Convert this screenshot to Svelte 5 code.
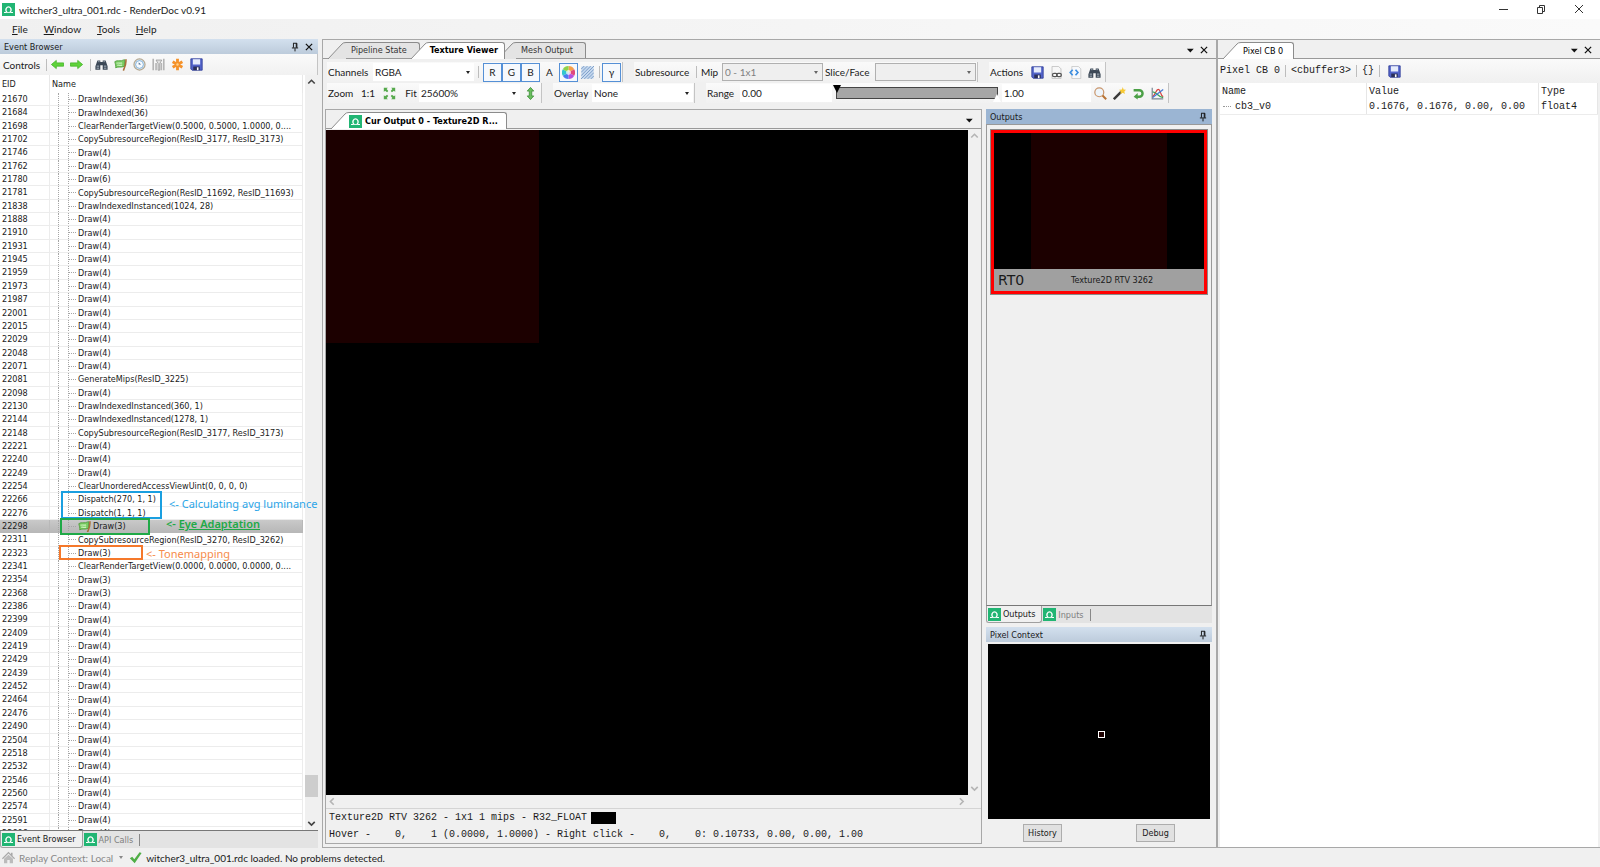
<script lang="ts">
  interface DrawEvent {
    eid: number
    name: string
    current?: boolean
  }

  function draws(count: number, ...eids: number[]): DrawEvent[] {
    return eids.map((eid) => ({ eid, name: `Draw(${count})` }))
  }

  const events: DrawEvent[] = [
    { eid: 21670, name: 'DrawIndexed(36)' },
    { eid: 21684, name: 'DrawIndexed(36)' },
    { eid: 21698, name: 'ClearRenderTargetView(0.5000, 0.5000, 1.0000, 0....' },
    { eid: 21702, name: 'CopySubresourceRegion(ResID_3177, ResID_3173)' },
    ...draws(4, 21746, 21762),
    ...draws(6, 21780),
    { eid: 21781, name: 'CopySubresourceRegion(ResID_11692, ResID_11693)' },
    { eid: 21838, name: 'DrawIndexedInstanced(1024, 28)' },
    ...draws(4, 21888, 21910, 21931, 21945, 21959, 21973, 21987, 22001, 22015, 22029, 22048, 22071),
    { eid: 22081, name: 'GenerateMips(ResID_3225)' },
    ...draws(4, 22098),
    { eid: 22130, name: 'DrawIndexedInstanced(360, 1)' },
    { eid: 22144, name: 'DrawIndexedInstanced(1278, 1)' },
    { eid: 22148, name: 'CopySubresourceRegion(ResID_3177, ResID_3173)' },
    ...draws(4, 22221, 22240, 22249),
    { eid: 22254, name: 'ClearUnorderedAccessViewUint(0, 0, 0, 0)' },
    { eid: 22266, name: 'Dispatch(270, 1, 1)' },
    { eid: 22276, name: 'Dispatch(1, 1, 1)' },
    { eid: 22298, name: 'Draw(3)', current: true },
    { eid: 22311, name: 'CopySubresourceRegion(ResID_3270, ResID_3262)' },
    ...draws(3, 22323),
    { eid: 22341, name: 'ClearRenderTargetView(0.0000, 0.0000, 0.0000, 0....' },
    ...draws(3, 22354, 22368),
    ...draws(4, 22386, 22399, 22409, 22419, 22429, 22439, 22452, 22464, 22476, 22490),
    ...draws(4, 22504, 22518, 22532, 22546, 22560, 22574, 22591, 22606),
  ]

  let selected = $state(22298)
  let rangeMin = $state(0)
  let rangeMax = $state(100)
  let channels = $state({ R: true, G: true, B: true, A: false })
</script>

{#snippet icon(name: string)}
  <svg class="icon" viewBox="0 0 16 16" aria-hidden="true">
    {#if name === 'logo'}
      <rect width="16" height="16" fill="#21b573" />
      <path
        d="M2.500 11.700H6.200C4.600 10 4.500 7.800 5.400 6.300c1.100-2 4.100-2 5.200 0 .9 1.500.8 3.700-.8 5.400h3.700"
        fill="none"
        stroke="#fff"
        stroke-width="1.500"
      />
      <path d="M5 11.700h6" stroke="#d5f5e6" stroke-width="1.200" />
    {:else if name === 'back' || name === 'forward'}
      <path
        d="M0.500 8L6.500 3v3h9v4h-9v3z"
        fill="#5fd33a"
        stroke="#45b52a"
        transform={name === 'forward' ? 'rotate(180 8 8)' : undefined}
      />
    {:else if name === 'find'}
      <path d="M3 3h3.500v2h3V3H13l2.500 7v4.500H9.500V9h-3v5.500H.5V10z" fill="#3c4856" />
      <path d="M2 10h3M11 10h3M4 4.500h1.500M10.500 4.500H12M2 12.500h3M11 12.500h3" stroke="#c4ced8" />
    {:else if name === 'flag'}
      <path d="M1 4.500c3-2.500 6 .5 12-2.500v8c-5 2.500-7 0-11 2 .5-2-.5-5-1-7.500z" fill="#79cc62" stroke="#4d9b3b" />
      <path d="M3 6.500c2-1 5 .5 7-.5M4 9c2-.5 4 .5 6-.2" stroke="#c9f2ba" fill="none" stroke-width="1.500" />
      <path d="M14.500 1.500c1 5-1 9-3 14" stroke="#a8713a" stroke-width="2" fill="none" />
    {:else if name === 'clock'}
      <circle cx="8" cy="8" r="6.800" fill="#dcecf7" stroke="#b3a68f" stroke-width="1.500" />
      <circle cx="8" cy="8" r="4.800" fill="#f5faff" stroke="#6fa3cf" />
      <path d="M7 5.500L10 8H7z" fill="#4a6b8a" />
    {:else if name === 'counters'}
      <path d="M1.500 1v14M5 6v9M11.500 6v9M14.500 1v14" stroke="#b4b4b4" stroke-width="2" />
      <path d="M5 2.500h7L9.500 7v8h-2V7z" fill="#e0e0e0" stroke="#999" />
    {:else if name === 'star'}
      <path d="M8 1v14M2 4.500l12 7M2 11.500l12-7" stroke="#f5922a" stroke-width="3.500" />
      <circle cx="8" cy="8" r="1.500" fill="#ffd28a" />
    {:else if name === 'save'}
      <path d="M1 1h14v14H2.500L1 13.500z" fill="#5263c9" stroke="#2e3b98" />
      <path d="M3.500 1.500h9V8h-9z" fill="#e6ecfb" />
      <path d="M4 10.500h8V15H4z" fill="#2a2f59" />
      <path d="M8.500 11.500h2V15h-2z" fill="#fff" />
    {:else if name === 'wheel'}
      <path d="M8 8V0a8 8 0 0 1 7 4z" fill="#f5a04a" />
      <path d="M8 8l7-4a8 8 0 0 1 0 8z" fill="#e1497c" />
      <path d="M8 8l7 4a8 8 0 0 1-7 4z" fill="#b850dd" />
      <path d="M8 8v8a8 8 0 0 1-7-4z" fill="#4c7cf0" />
      <path d="M8 8l-7 4a8 8 0 0 1 0-8z" fill="#33c6cf" />
      <path d="M8 8L1 4a8 8 0 0 1 7-4z" fill="#8ed24a" />
      <circle cx="8" cy="8" r="3" fill="#fff" opacity="0.700" />
    {:else if name === 'checker'}
      <rect x="0.500" y="0.500" width="15" height="15" fill="#c5d8ee" />
      <path d="M0 4l4-4M0 8l8-8M0 12L12 0M0 16L16 0M4 16L16 4M8 16l8-8M12 16l4-4" stroke="#7c9dc8" stroke-width="1.200" />
    {:else if name === 'fit'}
      <path
        d="M1 1h5L4.500 2.500 6.500 5 5 6.500 2.500 4.500 1 6zM15 1v5l-1.500-1.500L11 6.500 9.500 5l2-2.500L10 1zM1 15v-5l1.500 1.500L5 9.500 6.500 11l-2 2.500L6 15zM15 15h-5l1.500-1.500-2-2.500L11 9.500l2.500 2L15 10z"
        fill="#56a94c"
      />
    {:else if name === 'updown'}
      <path d="M8 0.500L12 5H9.500v6H12L8 15.500 4 11h2.500V5H4z" fill="#6abf5e" stroke="#3c8f37" />
    {:else if name === 'link'}
      <path d="M2.500.5h8l3 3v12h-11z" fill="#f7f7f7" stroke="#bbb" />
      <rect x="3" y="9" width="6" height="4" rx="2" fill="none" stroke="#555" stroke-width="1.500" />
      <rect x="8" y="9" width="6" height="4" rx="2" fill="none" stroke="#555" stroke-width="1.500" />
    {:else if name === 'code'}
      <path d="M3.500.5h8l3 3v12h-11z" fill="#f7f9fc" stroke="#c4c4c4" />
      <path d="M4.500 4.500L1.500 8l3 3.500M8 4.500L11 8l-3 3.500" fill="none" stroke="#3b8de0" stroke-width="2" />
    {:else if name === 'lens'}
      <circle cx="6.500" cy="6.500" r="5.500" fill="#eef5fb" stroke="#c9956b" stroke-width="1.500" />
      <path d="M10.500 10.500L15 15" stroke="#b87436" stroke-width="2.500" />
    {:else if name === 'wand'}
      <path d="M1 15L10 6" stroke="#3a3a3a" stroke-width="3" />
      <path d="M12 0l1 3 3 .5-2 2 .5 3L12 7 9 8.500l.5-3-2-2L11 3z" fill="#f7c934" />
    {:else if name === 'reset'}
      <path d="M2 4h7a4 4 0 0 1 0 8H6" fill="none" stroke="#4ba046" stroke-width="3" />
      <path d="M7 7.500v8L2 12z" fill="#4ba046" />
    {:else if name === 'histogram'}
      <path d="M1.500 1v13.500H15" fill="none" stroke="#7b8794" stroke-width="1.500" />
      <path d="M2 12C6 9 6 3 9 3s2 7 6 9" fill="none" stroke="#d8403c" stroke-width="1.500" />
      <path d="M2 6c5 0 7 7 13 7" fill="none" stroke="#3aa457" stroke-width="1.500" />
      <path d="M2 13L15 3" stroke="#4279d6" stroke-width="1.500" />
    {:else if name === 'pin'}
      <path d="M5 2h6M5.500 2v7M10 2v7M11 2v7M3 9.500h10M8 10v5" fill="none" stroke="#111" stroke-width="1.500" />
    {:else if name === 'close'}
      <path d="M3 3l10 10M13 3L3 13" stroke="#111" stroke-width="2" />
    {:else if name === 'menu'}
      <path d="M3 6h11L8.500 12z" fill="#111" />
    {:else if name === 'home'}
      <path d="M0 9L8 1l3 3V2h2v4l3 3-1 1-7-7-7 7z" fill="#a8a8a8" />
      <path d="M2.500 9.500L8 4.500l5.500 5V15h-4v-4h-3v4h-4z" fill="#bbb" />
    {:else if name === 'tick'}
      <path d="M1 9l3-2 2.500 3L13 1.500l2.500 1L7 15z" fill="#4fae46" />
    {:else if name === 'up'}
      <path d="M4 10.500l4-4 4 4" fill="none" stroke="currentColor" stroke-width="2" />
    {:else if name === 'down'}
      <path d="M4 6l4 4 4-4" fill="none" stroke="currentColor" stroke-width="2" />
    {:else if name === 'left'}
      <path d="M9.500 4l-4 4 4 4" fill="none" stroke="currentColor" stroke-width="2" />
    {:else if name === 'right'}
      <path d="M6 4l4 4-4 4" fill="none" stroke="currentColor" stroke-width="2" />
    {/if}
  </svg>
{/snippet}

{#snippet tool(name: string, label: string)}
  <button class="tool" title={label} aria-label={label}>{@render icon(name)}</button>
{/snippet}

{#snippet slant()}
  <svg class="slant" viewBox="0 0 18 17" aria-hidden="true">
    <path class="fill" d="M0 17L14 2Q15 0 18 0V17z" />
    <path d="M0 17L14 2Q15 .5 18 .5" fill="none" stroke="#8c8c8c" />
  </svg>
{/snippet}

<div class="app">
  <header class="titlebar">
    {@render icon('logo')}
    <span class="title">witcher3_ultra_001.rdc - RenderDoc v0.91</span>
    <div class="window-buttons">
      <button aria-label="Minimize"><svg viewBox="0 0 10 10"><path d="M1 5.500h9" /></svg></button>
      <button aria-label="Restore"><svg viewBox="0 0 10 10"><path d="M1.500 3.500h5v6h-5zM3.500 3V1.500h5v6H7" /></svg></button>
      <button aria-label="Close"><svg viewBox="0 0 10 10"><path d="M1 1l8 8M9 1L1 9" /></svg></button>
    </div>
  </header>

  <nav class="menubar">
    <button><u>F</u>ile</button>
    <button><u>W</u>indow</button>
    <button><u>T</u>ools</button>
    <button><u>H</u>elp</button>
  </nav>

  <div class="workspace">
    <aside class="browser">
      <div class="caption">
        <span>Event Browser</span>
        {@render tool('pin', 'Pin')}
        {@render tool('close', 'Close')}
      </div>
      <div class="strip controls">
        <span class="controls-label">Controls</span>
        <i class="sep"></i>
        {@render tool('back', 'Previous drawcall')}
        {@render tool('forward', 'Next drawcall')}
        <i class="sep"></i>
        {@render tool('find', 'Find')}
        {@render tool('flag', 'Go to EID')}
        {@render tool('clock', 'Time drawcalls')}
        {@render tool('counters', 'Select columns')}
        {@render tool('star', 'Bookmark')}
        {@render tool('save', 'Export')}
      </div>
      <div class="event-area">
        <table class="events">
          <thead>
            <tr><th class="eid">EID</th><th>Name</th></tr>
          </thead>
          <tbody>
            {#each events as event (event.eid)}
              <tr class:selected={event.eid === selected} onclick={() => (selected = event.eid)}>
                <td class="eid">{event.eid}</td>
                <td class="name">
                  <i class="branch"></i>
                  {#if event.current}{@render icon('flag')}{/if}
                  <span>{event.name}</span>
                </td>
              </tr>
            {/each}
          </tbody>
        </table>
        <div class="scroll">
          {@render icon('up')}
          <i class="thumb"></i>
          {@render icon('down')}
        </div>

        <div class="mark blue-box"></div>
        <div class="mark green-box"></div>
        <div class="mark orange-box"></div>
        <span class="note blue-note">&lt;- Calculating avg luminance</span>
        <span class="note green-note">&lt;- <u>Eye Adaptation</u></span>
        <span class="note orange-note">&lt;- Tonemapping</span>
      </div>
      <div class="bottom-tabs">
        <button class="on">{@render icon('logo')}Event Browser</button>
        <button>{@render icon('logo')}API Calls</button>
      </div>
    </aside>

    <main class="viewer">
      <div class="tabs">
        <button class="tab">{@render slant()}<span>Pipeline State</span></button>
        <button class="tab on">{@render slant()}<span>Texture Viewer</span></button>
        <button class="tab">{@render slant()}<span>Mesh Output</span></button>
        <div class="tab-tools">{@render tool('menu', 'Window list')}{@render tool('close', 'Close')}</div>
      </div>

      <div class="toolbar">
        <div class="strip">
          <label class="lbl" for="channels">Channels</label>
          <div class="combo"><select id="channels"><option>RGBA</option></select></div>
          <i class="sep"></i>
          {#each ['R', 'G', 'B', 'A'] as const as ch}
            <button class="toggle" class:on={channels[ch]} onclick={() => (channels[ch] = !channels[ch])}>{ch}</button>
          {/each}
          <button class="toggle on" aria-label="Custom background">{@render icon('wheel')}</button>
          <button class="toggle" aria-label="Checkerboard">{@render icon('checker')}</button>
          <i class="sep"></i>
          <button class="toggle on">γ</button>
        </div>
        <div class="strip">
          <span class="lbl subresource">Subresource</span>
          <i class="sep"></i>
          <label class="lbl short" for="mip">Mip</label>
          <div class="combo disabled"><select id="mip" disabled><option>0 - 1x1</option></select></div>
          <label class="lbl slice" for="slice">Slice/Face</label>
          <div class="combo disabled"><select id="slice" disabled><option></option></select></div>
        </div>
        <div class="strip">
          <span class="lbl actions">Actions</span>
          {@render tool('save', 'Save texture')}
          {@render tool('link', 'Open in new tab')}
          {@render tool('code', 'View raw contents')}
          {@render tool('find', 'Find usage')}
        </div>
      </div>

      <div class="toolbar">
        <div class="strip">
          <label class="lbl zoom" for="zoom">Zoom</label>
          <button class="text-tool">1:1</button>
          {@render tool('fit', 'Fit window')}
          <button class="text-tool">Fit</button>
          <div class="combo"><select id="zoom"><option>25600%</option></select></div>
          {@render tool('updown', 'Flip Y')}
        </div>
        <div class="strip">
          <label class="lbl overlay" for="overlay">Overlay</label>
          <div class="combo"><select id="overlay"><option>None</option></select></div>
        </div>
        <div class="strip">
          <label class="lbl range-label" for="range-low">Range</label>
          <input class="number" id="range-low" value="0.00" />
          <div class="range">
            <input type="range" class="low" aria-label="Range minimum" bind:value={rangeMin} />
            <input type="range" class="high" aria-label="Range maximum" bind:value={rangeMax} />
          </div>
          <input class="number" aria-label="Range high" value="1.00" />
          {@render tool('lens', 'Zoom to range')}
          {@render tool('wand', 'Auto-fit range')}
          {@render tool('reset', 'Reset range')}
          {@render tool('histogram', 'Histogram')}
        </div>
      </div>

      <div class="docks">
        <section class="texture">
          <div class="tabs">
            <button class="tab on">{@render slant()}<span>{@render icon('logo')}Cur Output 0 - Texture2D R...</span></button>
            <div class="tab-tools">{@render tool('menu', 'Window list')}</div>
          </div>
          <div class="view">
            <div class="canvas"><div class="texel"></div></div>
            <div class="scroll pale">{@render icon('up')}{@render icon('down')}</div>
          </div>
          <div class="hscroll">{@render icon('left')}{@render icon('right')}</div>
          <div class="readout">
            <p>Texture2D RTV 3262 - 1x1 1 mips - R32_FLOAT<i class="swatch"></i></p>
            <p>Hover -    0,    1 (0.0000, 1.0000) - Right click -    0,    0: 0.10733, 0.00, 0.00, 1.00</p>
          </div>
        </section>

        <div class="side">
          <section class="outputs">
            <div class="caption active"><span>Outputs</span>{@render tool('pin', 'Pin')}</div>
            <div class="thumbs">
              <button class="thumbnail">
                <span class="preview"><i></i></span>
                <span class="thumb-label"><b>RT0</b><span>Texture2D RTV 3262</span></span>
              </button>
            </div>
            <div class="bottom-tabs">
              <button class="on">{@render icon('logo')}Outputs</button>
              <button>{@render icon('logo')}Inputs</button>
            </div>
          </section>
          <section class="context">
            <div class="caption"><span>Pixel Context</span>{@render tool('pin', 'Pin')}</div>
            <div class="pixels"><i></i></div>
            <div class="context-buttons">
              <button>History</button>
              <button>Debug</button>
            </div>
          </section>
        </div>
      </div>
    </main>

    <aside class="buffer">
      <div class="tabs">
        <button class="tab on plain">{@render slant()}<span>Pixel CB 0</span></button>
        <div class="tab-tools">{@render tool('menu', 'Window list')}{@render tool('close', 'Close')}</div>
      </div>
      <div class="buffer-bar">
        <span>Pixel CB 0</span>
        <i class="sep"></i>
        <span>&lt;cbuffer3&gt;</span>
        <i class="sep"></i>
        <button class="braces">{'{}'}</button>
        <i class="sep"></i>
        {@render tool('save', 'Save')}
      </div>
      <div class="buffer-body">
        <table>
          <thead>
            <tr><th>Name</th><th class="value">Value</th><th class="type">Type</th></tr>
          </thead>
          <tbody>
            <tr><td><i class="twig"></i>cb3_v0</td><td>0.1676, 0.1676, 0.00, 0.00</td><td>float4</td></tr>
          </tbody>
        </table>
      </div>
    </aside>
  </div>

  <footer class="status">
    {@render icon('home')}
    <span class="muted">Replay Context: Local</span>
    <i class="drop"></i>
    {@render icon('tick')}
    <span>witcher3_ultra_001.rdc loaded. No problems detected.</span>
  </footer>
</div>

<style>
  :global(body) {
    margin: 0;
  }

  .app {
    display: flex;
    flex-direction: column;
    height: 100vh;
    overflow: hidden;
    background: #f0f0f0;
    color: #1a1a1a;
    font: 10px/14px Lato, 'Open Sans', sans-serif;
    white-space: nowrap;
  }

  button,
  select,
  input {
    margin: 0;
    padding: 0;
    border: 0;
    border-radius: 0;
    background: none;
    color: inherit;
    font: inherit;
  }

  .icon {
    display: block;
    flex: none;
    width: 13px;
    height: 13px;
  }

  .titlebar {
    display: flex;
    align-items: center;
    flex: none;
    height: 19px;
    padding-left: 2px;
    gap: 4px;
    background: #fff;
  }

  .title {
    flex: 1;
  }

  .window-buttons {
    display: flex;
    padding-right: 2px;
  }

  .window-buttons button {
    width: 38px;
    height: 17px;
  }

  .window-buttons svg {
    width: 10px;
    height: 10px;
    fill: none;
    stroke: #333;
  }

  .menubar {
    display: flex;
    align-items: center;
    flex: none;
    height: 20px;
    padding-left: 12px;
    gap: 16px;
    background: linear-gradient(90deg, #f0f0f0, #fafafa);
  }

  .workspace {
    display: flex;
    flex: 1;
    min-height: 0;
  }

  /* captions and tool strips */
  .caption {
    display: flex;
    align-items: center;
    flex: none;
    height: 15px;
    padding: 0 2px 0 4px;
    background: linear-gradient(#d3e0ee, #bccbdb);
    font: 9px/14px 'DejaVu Sans Condensed', 'DejaVu Sans', sans-serif;
  }

  .caption span {
    flex: 1;
  }

  .caption .tool {
    width: 14px;
  }

  .caption .icon,
  .tab-tools .icon {
    width: 10px;
    height: 10px;
  }

  .caption.active {
    background: #9bb5d3;
  }

  .tool {
    display: flex;
    align-items: center;
    justify-content: center;
    flex: none;
    width: 19px;
    height: 17px;
  }

  .sep {
    flex: none;
    width: 1px;
    height: 12px;
    background: #bdbdbd;
  }

  .strip {
    display: flex;
    align-items: center;
    flex: none;
    height: 20px;
    padding-right: 1px;
    border-right: 1px solid #c4c4c4;
    background: linear-gradient(#fafafa, #f1f1f1);
  }

  /* event browser */
  .browser {
    display: flex;
    flex-direction: column;
    flex: none;
    width: 318px;
  }

  .controls {
    height: 21px;
    padding-left: 3px;
  }

  .controls-label {
    width: 43px;
  }

  .controls .sep {
    margin-right: 1px;
  }

  .controls .sep:not(:nth-child(2)) {
    margin-left: 4px;
  }

  .event-area {
    position: relative;
    display: flex;
    flex: 1;
    min-height: 0;
    overflow: hidden;
    background: #fff;
    border-bottom: 1px solid #777;
  }

  .events,
  .events tbody {
    display: flex;
    flex-direction: column;
    flex: 1;
    min-width: 0;
    min-height: 0;
  }

  .events {
    /* the last row runs under the bottom edge */
    margin: 0 2px -10px 0;
    font: 9px/12px 'DejaVu Sans Condensed', 'DejaVu Sans', sans-serif;
  }

  .events thead tr {
    display: flex;
    height: 18px;
    line-height: 19px;
  }

  .events th {
    padding: 0 0 0 2px;
    border-right: 1px solid #e8e8e8;
    font-weight: normal;
    text-align: left;
  }

  .events th:last-child {
    flex: 1;
  }

  .events tbody tr {
    display: flex;
    flex: 1;
    min-height: 0;
  }

  .events td {
    padding: 0 0 0 2px;
    border-right: 1px solid #ececec;
    border-bottom: 1px solid #ececec;
    overflow: hidden;
  }

  .events .eid {
    box-sizing: border-box;
    width: 50px;
  }

  .events .name {
    display: flex;
    align-items: center;
    flex: 1;
    min-width: 0;
    padding-left: 8px;
    gap: 2px;
  }

  .branch {
    align-self: stretch;
    box-sizing: border-box;
    width: 18px;
    border-left: 1px dotted #a5a5a5;
    background:
      repeating-linear-gradient(#a5a5a5 0 1px, transparent 1px 2px) 9px 0 / 1px 100% no-repeat,
      repeating-linear-gradient(90deg, #a5a5a5 0 1px, transparent 1px 2px) 10px 6px / 7px 1px no-repeat;
  }

  .events .selected td {
    background: linear-gradient(#c9c9c9, #b8b8b8);
    border-color: #b8b8b8;
  }

  .scroll {
    display: flex;
    flex-direction: column;
    flex: none;
    width: 13px;
    background: #f0f0f0;
    color: #444;
  }

  .thumb {
    height: 22px;
    margin-top: auto;
    margin-bottom: 20px;
    background: #cdcdcd;
  }

  .pale {
    justify-content: space-between;
    color: #b5b5b5;
  }

  /* hand-drawn remarks over the event list */
  .mark,
  .note {
    position: absolute;
    box-sizing: border-box;
    pointer-events: none;
  }

  .mark {
    border: 2px solid;
  }

  .blue-box {
    left: 61px;
    top: 416px;
    width: 101px;
    height: 28px;
    color: #1a9fe0;
  }

  .green-box {
    left: 60px;
    top: 443px;
    width: 90px;
    height: 17px;
    color: #1fa947;
  }

  .orange-box {
    left: 59px;
    top: 470px;
    width: 84px;
    height: 15px;
    color: #f5782a;
  }

  .note {
    font: 11px/14px 'Noto Sans', sans-serif;
  }

  .blue-note {
    left: 169px;
    top: 422px;
    color: #2ba5e8;
  }

  .green-note {
    left: 166px;
    top: 442px;
    color: #1fa947;
    font-weight: 600;
  }

  .orange-note {
    left: 146px;
    top: 472px;
    color: #f68b4a;
  }

  .bottom-tabs {
    display: flex;
    flex: none;
    height: 17px;
    background: #e3e3e3;
    color: #808080;
    font: 9px/14px 'DejaVu Sans Condensed', 'DejaVu Sans', sans-serif;
  }

  .bottom-tabs button {
    display: flex;
    align-items: center;
    padding: 0 6px 0 1px;
    gap: 2px;
  }

  .bottom-tabs button:last-child::after {
    content: '';
    width: 1px;
    height: 12px;
    margin-left: 4px;
    background: #888;
  }

  .bottom-tabs .on {
    border: solid #a0a0a0;
    border-width: 0 1px 1px;
    border-radius: 0 0 3px 3px;
    background: #f0f0f0;
    color: #1a1a1a;
  }

  /* document tabs */
  .viewer {
    display: flex;
    flex-direction: column;
    flex: 1;
    min-width: 0;
    box-sizing: border-box;
    margin-left: 4px;
    border: solid #a8a8a8;
    border-width: 1px 2px 1px 1px;
  }

  .tabs {
    display: flex;
    align-items: flex-end;
    flex: none;
    height: 19px;
    padding-left: 5px;
    box-sizing: border-box;
    border-bottom: 1px solid #999;
    font: 9px/14px 'DejaVu Sans Condensed', 'DejaVu Sans', sans-serif;
  }

  .tab {
    position: relative;
    display: flex;
    height: 16px;
    color: #333;
  }

  .tab + .tab {
    margin-left: -9px;
  }

  .tab.on + .tab {
    margin-left: -7px;
  }

  .slant {
    width: 18px;
    height: 17px;
  }

  .slant .fill {
    fill: #e4e4e4;
  }

  .tab span {
    display: flex;
    align-items: center;
    height: 16px;
    box-sizing: border-box;
    padding: 0 12px 2px 5px;
    gap: 3px;
    border: solid #8c8c8c;
    border-width: 1px 1px 0 0;
    border-radius: 0 3px 0 0;
    background: #e4e4e4;
  }

  .tab.on {
    z-index: 1;
    height: 17px;
    margin-bottom: -1px;
    color: #000;
    font-weight: bold;
  }

  .tab.on span {
    height: 17px;
    padding: 0 6px 2px 1px;
    background: #fff;
  }

  .tab.on .fill {
    fill: #fff;
  }

  .texture .tab span {
    padding: 0 8px 0 0;
  }

  .tab.plain {
    font-weight: normal;
  }

  .tab.plain span {
    padding: 0 10px 0 2px;
  }

  .tab-tools {
    display: flex;
    margin-left: auto;
    padding-right: 5px;
  }

  .tab-tools .tool {
    width: 14px;
  }

  /* texture toolbars */
  .toolbar {
    display: flex;
    flex: none;
    height: 20px;
    margin-top: 1px;
    padding-left: 4px;
    gap: 11px;
  }

  .tabs + .toolbar {
    margin-top: 3px;
  }

  .lbl {
    flex: none;
    width: 46px;
    padding-left: 1px;
    box-sizing: border-box;
  }

  .lbl.subresource {
    width: 62px;
  }

  .lbl.short {
    width: 25px;
    padding-left: 4px;
  }

  .lbl.slice {
    width: 52px;
    padding-left: 2px;
  }

  .lbl.actions {
    width: 39px;
  }

  .lbl.zoom,
  .lbl.range-label {
    width: 34px;
  }

  .lbl.overlay {
    width: 39px;
  }

  .combo {
    position: relative;
    width: 101px;
    height: 18px;
    box-sizing: border-box;
    background: #fff;
  }

  .combo::after {
    content: '';
    position: absolute;
    right: 4px;
    top: 8px;
    border: solid transparent;
    border-width: 3px 2px 0;
    border-top-color: #222;
    pointer-events: none;
  }

  .combo select {
    width: 100%;
    height: 100%;
    padding-left: 2px;
    appearance: none;
    opacity: 1;
  }

  .combo.disabled {
    border: 1px solid #b0b0b0;
    background: #efefef;
    color: #808080;
  }

  .combo.disabled::after {
    top: 7px;
    border-top-color: #666;
  }

  .strip > .combo + .sep {
    margin: 0 4px;
  }

  .toggle {
    display: flex;
    align-items: center;
    justify-content: center;
    width: 19px;
    height: 19px;
    box-sizing: border-box;
  }

  .toggle.on {
    border: 1px solid #5590d6;
    background: #f6f9fd;
  }

  .toggle + .sep {
    margin: 0 2px;
  }

  .text-tool {
    width: 14px;
  }

  .text-tool + .tool {
    margin: 0 5px;
  }

  .text-tool + .combo {
    margin: 0 1px;
  }

  .number {
    width: 92px;
    height: 18px;
    padding-left: 2px;
    box-sizing: border-box;
    background: #fff;
  }

  .range + .number {
    width: 89px;
  }

  .range {
    position: relative;
    width: 162px;
    height: 12px;
    margin: 0 4px;
    box-sizing: border-box;
    border: 1px solid #444;
    background: #a6a6a6;
  }

  .range input {
    position: absolute;
    left: -4px;
    width: calc(100% + 8px);
    height: 8px;
    appearance: none;
    pointer-events: none;
  }

  .range .low {
    top: -3px;
  }

  .range .high {
    top: 6px;
  }

  .range input::-webkit-slider-thumb {
    appearance: none;
    width: 8px;
    height: 8px;
    background: #000;
    clip-path: polygon(0 0, 100% 0, 50% 100%);
    pointer-events: auto;
  }

  .range .high::-webkit-slider-thumb {
    background: #fff;
    clip-path: polygon(50% 0, 100% 100%, 0 100%);
  }

  /* texture view */
  .docks {
    display: flex;
    flex: 1;
    min-height: 0;
    margin-top: 6px;
    padding: 0 4px 3px 2px;
    gap: 4px;
  }

  .texture {
    display: flex;
    flex-direction: column;
    flex: 1;
    min-width: 0;
    border: 1px solid #a8a8a8;
  }

  .view {
    display: flex;
    flex: 1;
    min-height: 0;
  }

  .canvas {
    flex: 1;
    margin-top: 1px;
    background: #000;
  }

  .texel {
    width: 213px;
    height: 213px;
    background: #1c0000;
  }

  .hscroll {
    display: flex;
    justify-content: space-between;
    height: 13px;
    padding-right: 13px;
    border-bottom: 1px solid #d4d4d4;
    color: #b5b5b5;
  }

  .readout {
    padding: 0 3px;
    font: 10px/17px 'Liberation Mono', monospace;
  }

  .readout p {
    display: flex;
    align-items: center;
    margin: 0;
    white-space: pre;
  }

  .swatch {
    width: 25px;
    height: 12px;
    margin-left: 4px;
    background: #000;
  }

  .side {
    display: flex;
    flex-direction: column;
    flex: none;
    width: 226px;
    gap: 4px;
  }

  .outputs {
    display: flex;
    flex-direction: column;
    flex: 1;
    min-height: 0;
  }

  .thumbs {
    flex: 1;
    padding: 5px 4px;
    border: 1px solid #999;
    border-bottom-color: #777;
  }

  .thumbnail {
    display: block;
    width: 100%;
    border: 3px solid #f00;
    outline: 1px solid #8a8a8a;
  }

  .preview {
    display: flex;
    justify-content: center;
    height: 136px;
    background: #000;
  }

  .preview i {
    width: 136px;
    background: #1c0000;
  }

  .thumb-label {
    display: flex;
    align-items: center;
    height: 22px;
    padding-left: 4px;
    background: #a0a0a0;
    font: 9px/14px 'DejaVu Sans Condensed', 'DejaVu Sans', sans-serif;
  }

  .thumb-label b {
    font: 14px/18px 'DejaVu Sans', sans-serif;
  }

  .thumb-label span {
    flex: 1;
    padding-right: 4px;
  }

  .context {
    display: flex;
    flex-direction: column;
    flex: none;
  }

  .pixels {
    display: flex;
    align-items: center;
    justify-content: center;
    box-sizing: border-box;
    height: 175px;
    margin: 2px;
    padding: 6px 0 0 4px;
    background: #000;
  }

  .pixels i {
    width: 5px;
    height: 5px;
    border: 1px solid #fff;
    background: #1c0000;
  }

  .context-buttons {
    display: flex;
    justify-content: space-around;
    padding: 3px 0 2px;
    font: 9px/14px 'DejaVu Sans Condensed', 'DejaVu Sans', sans-serif;
  }

  .context-buttons button {
    width: 39px;
    height: 18px;
    border: 1px solid #adadad;
    background: #e1e1e1;
  }

  /* constant buffer */
  .buffer {
    display: flex;
    flex-direction: column;
    flex: none;
    width: 382px;
    border-top: 1px solid #a8a8a8;
    border-bottom: 1px solid #a8a8a8;
    box-sizing: border-box;
    font: 10px/14px 'Liberation Mono', monospace;
  }

  .buffer-bar {
    display: flex;
    align-items: center;
    height: 24px;
    padding-left: 2px;
    gap: 5px;
    background: linear-gradient(#fafafa, #f0f0f0);
  }

  .braces {
    width: 12px;
  }

  .buffer-body {
    flex: 1;
    margin: 0 2px;
    background: #fff;
  }

  .buffer table {
    width: 100%;
    border-collapse: collapse;
    table-layout: fixed;
  }

  .buffer th,
  .buffer td {
    padding: 0 2px;
    border-right: 1px solid #e6e6e6;
    font-weight: normal;
    text-align: left;
  }

  .buffer td {
    border-bottom: 1px solid #ececec;
  }

  .buffer th {
    height: 17px;
  }

  .buffer .value {
    width: 167px;
  }

  .buffer .type {
    width: 54px;
  }

  .twig {
    display: inline-block;
    width: 8px;
    margin: 0 4px 0 1px;
    border-top: 1px dotted #999;
    vertical-align: middle;
  }

  .status {
    display: flex;
    align-items: center;
    flex: none;
    height: 19px;
    padding-left: 2px;
    gap: 4px;
  }

  .muted {
    color: #888;
  }

  .drop {
    margin: 0 2px;
    border: solid transparent;
    border-width: 3px 2px 0;
    border-top-color: #888;
  }
</style>
